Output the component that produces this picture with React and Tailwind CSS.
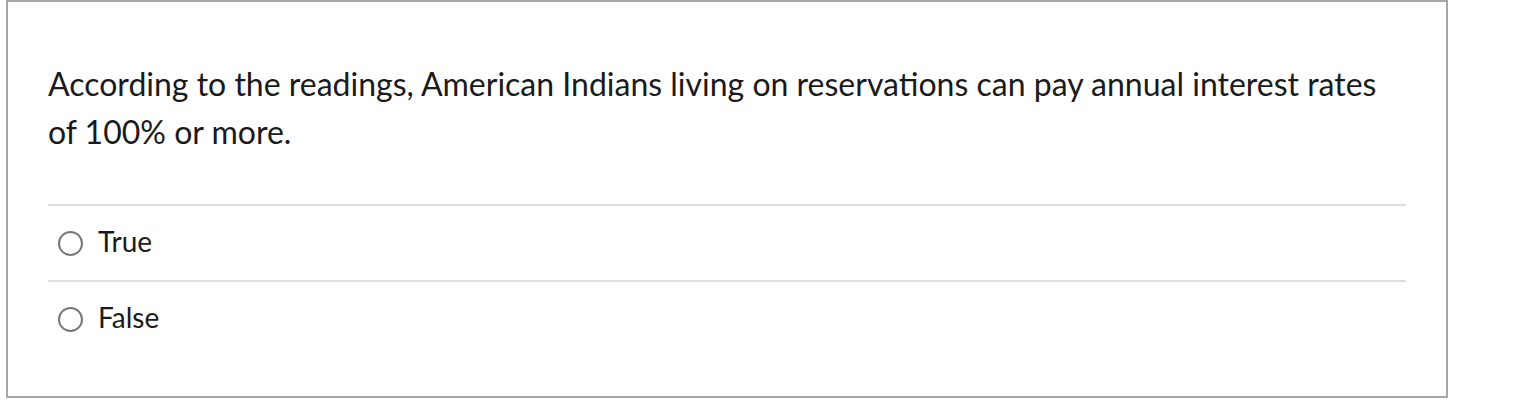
export default function App() {
  const options = ['True', 'False'];
  return (
    <div className="bg-white w-[1516px] h-[414px]" style={{ fontFamily: 'Lato, "Noto Sans", sans-serif' }}>
      <div className="ml-[6px] w-[1442px] h-[398px] border-2 border-[#a8a8a8] px-10 pt-[58px]">
        <p className="text-[32px] leading-[48px] text-[#1a1a1a]">
          According to the readings, American Indians living on reservations can pay annual interest rates of 100% or more.
        </p>
        <div className="mt-[48px]">
          {options.map((opt) => (
            <label key={opt} className="flex items-center h-[76px] border-t-2 border-[#dedede] pl-[10px]">
              <span className="w-[25px] h-[25px] rounded-full border-2 border-[#777] mr-[15px]" />
              <span className="text-[28px] text-[#1a1a1a] mb-[4px]">{opt}</span>
            </label>
          ))}
        </div>
      </div>
    </div>
  );
}
